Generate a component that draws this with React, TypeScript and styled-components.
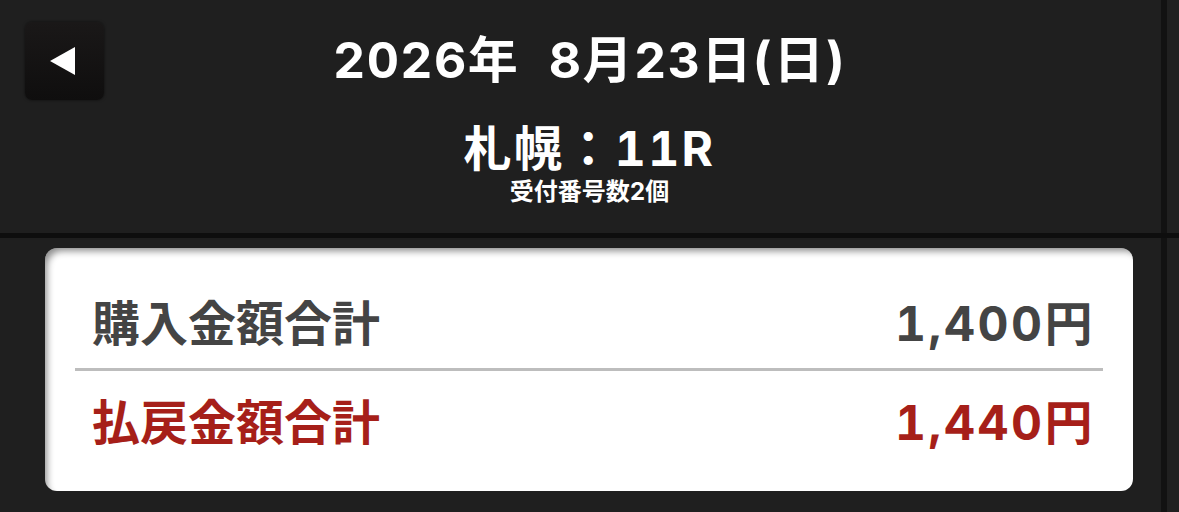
import React from "react";
import styled, { createGlobalStyle } from "styled-components";

const GlobalStyle = createGlobalStyle`
  html, body {
    margin: 0;
    padding: 0;
    background: #1f1f1f;
  }
  body {
    font-family: Inter, "Noto Sans CJK JP", "Noto Sans", sans-serif;
    font-variant-numeric: tabular-nums;
    -webkit-font-smoothing: antialiased;
  }
`;

const Screen = styled.div`
  width: 1179px;
  height: 512px;
  overflow: hidden;
  background-color: #1f1f1f;
  /* edge of the side column */
  background-image: linear-gradient(
    to right,
    transparent 1161px,
    #121212 1161px,
    #121212 1167px,
    #202020 1167px
  );
`;

const Header = styled.header`
  display: grid;
  grid-template-columns: 1fr auto 1fr;
  height: 238px;
  box-sizing: border-box;
  padding: 22px 25px 0;
  border-bottom: 5px solid #0e0e0e;
`;

const BackButton = styled.button`
  justify-self: start;
  align-self: start;
  display: flex;
  align-items: center;
  justify-content: center;
  width: 79px;
  height: 78px;
  padding: 0 4px 0 0;
  border: none;
  border-radius: 7px;
  background: linear-gradient(#1a1818, #0f0e0e);
  box-shadow: 0 0 3px rgba(0, 0, 0, 0.6);
  cursor: pointer;
`;

const Titles = styled.div`
  display: flex;
  flex-direction: column;
  align-items: center;
  color: #fff;
  font-weight: 700;
`;

const DateLine = styled.div`
  margin-top: 8px;
  font-size: 50px;
  line-height: 60px;
  white-space: pre;
  letter-spacing: 1.4px;
`;

const RaceLine = styled.div`
  margin-top: 31px;
  font-size: 48px;
  line-height: 56px;
  white-space: pre;
  letter-spacing: 2.4px;
`;

const Receipts = styled.div`
  margin-top: 2px;
  font-size: 24px;
  line-height: 26px;
`;

const Card = styled.section`
  margin: 10px 46px 0 45px;
  height: 243px;
  box-sizing: border-box;
  padding: 0 30px;
  background: #fff;
  border-radius: 12px;
  box-shadow: inset 5px 6px 7px -3px rgba(0, 0, 0, 0.45);
`;

const Row = styled.div<{ $red?: boolean; $top: number; $bottom?: boolean }>`
  display: flex;
  justify-content: space-between;
  align-items: center;
  padding: ${(p) => p.$top}px 8px 0 17px;
  height: ${(p) => (p.$bottom ? 96 : 123)}px;
  box-sizing: border-box;
  font-size: 48px;
  line-height: 60px;
  font-weight: 700;
  color: ${(p) => (p.$red ? "#a61f19" : "#444")};
  border-bottom: ${(p) => (p.$bottom ? "none" : "3px solid #bdbdbd")};
`;

const Amount = styled.span`
  letter-spacing: 2.5px;
`;

const Arrow = () => (
  <svg width="26" height="30" viewBox="0 0 26 30">
    <polygon points="0,15 25,1 25,29" fill="#fff" />
  </svg>
);

export default function App() {
  return (
    <>
      <GlobalStyle />
      <Screen>
        <Header>
          <BackButton aria-label="戻る">
            <Arrow />
          </BackButton>
          <Titles>
            <DateLine>2026年  8月23日(日)</DateLine>
            <RaceLine>札幌：11R</RaceLine>
            <Receipts>受付番号数2個</Receipts>
          </Titles>
          <div />
        </Header>
        <Card>
          <Row $top={32}>
            <span>購入金額合計</span>
            <Amount>1,400円</Amount>
          </Row>
          <Row $red $top={8} $bottom>
            <span>払戻金額合計</span>
            <Amount>1,440円</Amount>
          </Row>
        </Card>
      </Screen>
    </>
  );
}
